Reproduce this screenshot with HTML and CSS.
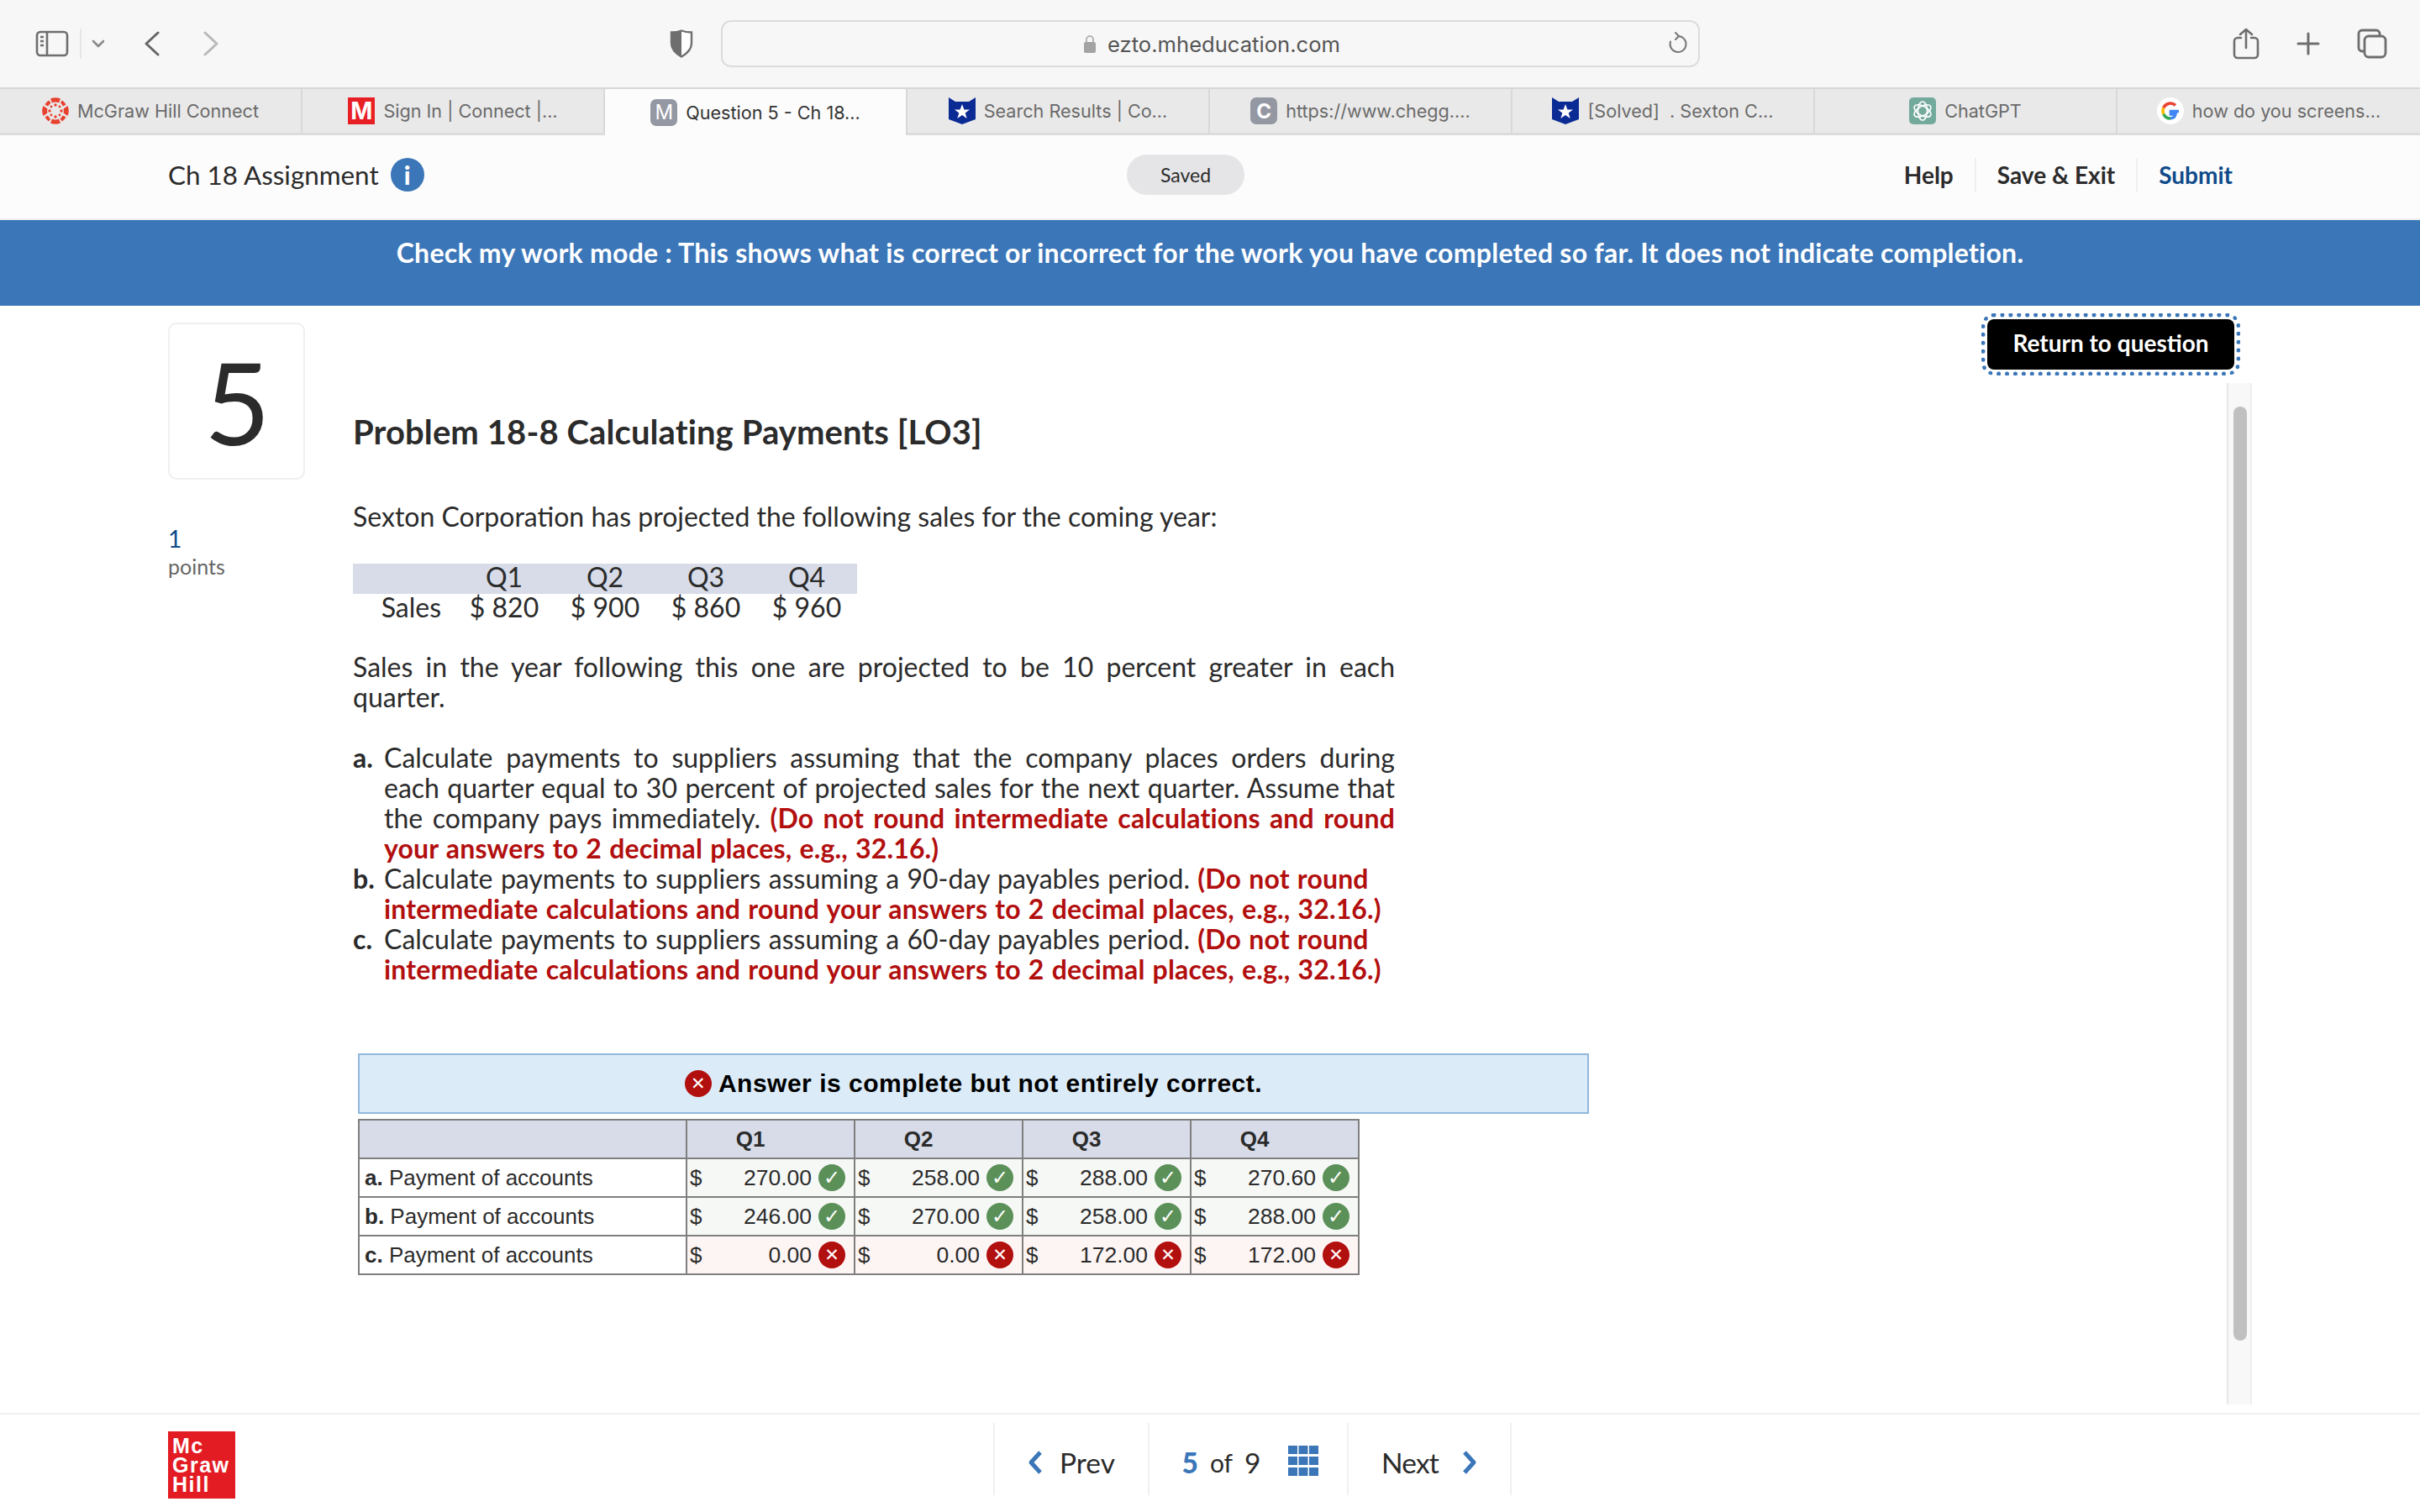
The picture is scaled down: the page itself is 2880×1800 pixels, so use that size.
FILE: index.html
```html
<!DOCTYPE html>
<html lang="en">
  <head>
    <meta charset="UTF-8" />
    <title>Question 5 - Ch 18 Assignment</title>
    <link rel="stylesheet" href="styles.css">
  </head>
  <body>
    <!-- Browser chrome -->
    <div class="toolbar">
      <div class="tool-left">
        <svg class="ic-sidebar" width="40" height="32" viewBox="0 0 40 32" fill="none" stroke="#6e6e6e" stroke-width="2.6"><rect x="2" y="2" width="36" height="28" rx="4"/><path d="M14 2v28M6 8h4M6 13h4M6 18h4"/></svg>
        <span class="tool-sep"></span>
        <svg class="ic-down" width="16" height="12" viewBox="0 0 16 12" fill="none" stroke="#8a8a8a" stroke-width="2.6" stroke-linecap="round" stroke-linejoin="round"><path d="M2 3l6 6 6-6"/></svg>
        <svg class="ic-back" width="20" height="30" viewBox="0 0 20 30" fill="none" stroke="#666" stroke-width="3" stroke-linecap="round" stroke-linejoin="round"><path d="M17 2L3 15l14 13"/></svg>
        <svg class="ic-fwd" width="20" height="30" viewBox="0 0 20 30" fill="none" stroke="#b9b9b9" stroke-width="3" stroke-linecap="round" stroke-linejoin="round"><path d="M3 2l14 13L3 28"/></svg>
      </div>
      <svg class="ic-shield" width="28" height="34" viewBox="0 0 28 34"><path d="M14 1.500C10 3 6 3.500 2 3.500v13c0 7 5 12 12 16 7-4 12-9 12-16v-13c-4 0-8-.5-12-2z" fill="#fff" stroke="#6e6e6e" stroke-width="2.400"/><path d="M14 1.500C10 3 6 3.500 2 3.500v13c0 7 5 12 12 16z" fill="#6e6e6e"/></svg>
      <div class="urlbar">
        <span class="url-text">
          <svg width="14" height="22" viewBox="0 0 14 22"><rect x="0" y="9" width="14" height="13" rx="2" fill="#a3a3a3"/><path d="M3 9V6a4 4 0 018 0v3" fill="none" stroke="#b5b5b5" stroke-width="2"/></svg>
          ezto.mheducation.com
        </span>
        <svg class="ic-reload" width="24" height="28" viewBox="0 0 24 28" fill="none" stroke="#777" stroke-width="2" stroke-linecap="round" stroke-linejoin="round"><path d="M12 5a9.500 9.500 0 11-9 6.500"/><path d="M9 1l4 4-4 4"/></svg>
      </div>
      <div class="tool-right">
        <svg width="32" height="38" viewBox="0 0 32 38" fill="none" stroke="#6e6e6e" stroke-width="2.600" stroke-linecap="round" stroke-linejoin="round"><path d="M10 12H6a4 4 0 00-4 4v16a4 4 0 004 4h20a4 4 0 004-4V16a4 4 0 00-4-4h-4M16 24V2M9 8l7-6 7 6"/></svg>
        <svg width="28" height="28" viewBox="0 0 28 28" fill="none" stroke="#6e6e6e" stroke-width="3" stroke-linecap="round"><path d="M14 2v24M2 14h24"/></svg>
        <svg width="36" height="36" viewBox="0 0 36 36" fill="none" stroke="#6e6e6e" stroke-width="2.800"><rect x="9" y="9" width="25" height="25" rx="5"/><path d="M8 27H6a4 4 0 01-4-4V6a4 4 0 014-4h17a4 4 0 014 4v2"/></svg>
      </div>
    </div>

    <div class="tabs">
      <div class="tab">
        <svg class="fav" viewBox="0 0 32 32" fill="#e8412e"><path d="M10 1.500a15 15 0 0112 0l-2 5a9 9 0 00-8 0zM22 30.500a15 15 0 01-12 0l2-5a9 9 0 008 0zM1.500 10l5 3.500a9 9 0 000 5l-5 3.500a15 15 0 010-12zM30.500 22l-5-3.500a9 9 0 000-5l5-3.500a15 15 0 010 12zM24 3.500a15 15 0 014.500 5l-3.500 2-3-4.500zM8 28.500a15 15 0 01-4.500-5l3.500-2 3 4.500zM3.500 8.500A15 15 0 018 3.500l2.500 3-3.500 4zM28.500 23.500a15 15 0 01-4.500 5l-2.500-3 3.500-4z"/><circle cx="16" cy="9" r="1.700"/><circle cx="16" cy="23" r="1.700"/><circle cx="9" cy="16" r="1.700"/><circle cx="23" cy="16" r="1.700"/><circle cx="11" cy="11" r="1.400"/><circle cx="21" cy="11" r="1.400"/><circle cx="11" cy="21" r="1.400"/><circle cx="21" cy="21" r="1.400"/></svg>
        McGraw Hill Connect
      </div>
      <div class="tab"><span class="fav fav-m">M</span>Sign In | Connect |...</div>
      <div class="tab tab-active"><span class="fav fav-gray">M</span>Question 5 - Ch 18...</div>
      <div class="tab">
        <svg class="fav" viewBox="0 0 32 32"><path d="M0 0l8 5h16l8-5v26l-16 6L0 26z" fill="#0a2a94"/><path d="M16 8l2.400 6.500H25l-5.300 4 2 6.500-5.700-4-5.700 4 2-6.500-5.300-4h6.600z" fill="#fff"/></svg>
        Search Results | Co...
      </div>
      <div class="tab"><span class="fav fav-gray fav-bold">C</span>https://www.chegg....</div>
      <div class="tab">
        <svg class="fav" viewBox="0 0 32 32"><path d="M0 0l8 5h16l8-5v26l-16 6L0 26z" fill="#0a2a94"/><path d="M16 8l2.400 6.500H25l-5.300 4 2 6.500-5.700-4-5.700 4 2-6.500-5.300-4h6.600z" fill="#fff"/></svg>
        [Solved]&nbsp; . Sexton C...
      </div>
      <div class="tab">
        <svg class="fav" viewBox="0 0 32 32"><rect width="32" height="32" rx="5" fill="#74aa9c"/><g fill="none" stroke="#fff" stroke-width="1.600"><ellipse cx="16" cy="16" rx="5.500" ry="11"/><ellipse cx="16" cy="16" rx="5.500" ry="11" transform="rotate(60 16 16)"/><ellipse cx="16" cy="16" rx="5.500" ry="11" transform="rotate(120 16 16)"/></g></svg>
        ChatGPT
      </div>
      <div class="tab">
        <svg class="fav" viewBox="0 0 32 32"><circle cx="16" cy="16" r="16" fill="#fff"/><path d="M26 16.500H16.500v3.500h5.400c-.6 3-3 4.800-5.900 4.800" fill="none" stroke="#4285f4" stroke-width="3.600"/><path d="M16 25a9 9 0 01-8.200-5.300" fill="none" stroke="#34a853" stroke-width="3.600"/><path d="M7.800 19.700a9 9 0 010-7.400" fill="none" stroke="#fbbc05" stroke-width="3.600"/><path d="M7.800 12.300A9 9 0 0122 9.300" fill="none" stroke="#ea4335" stroke-width="3.600"/></svg>
        how do you screens...
      </div>
    </div>

    <!-- Assignment header -->
    <header class="page-head">
      <div class="head-title">Ch 18 Assignment <span class="info-dot">i</span></div>
      <div class="saved">Saved</div>
      <nav class="head-nav"><a>Help</a><a>Save &amp; Exit</a><a class="submit-link">Submit</a></nav>
    </header>

    <div class="banner">Check my work mode : This shows what is correct or incorrect for the work you have completed so far. It does not indicate completion.</div>

    <main class="content">
      <aside class="side">
        <div class="num-card">5</div>
        <div class="pts-num">1</div>
        <div class="pts-label">points</div>
      </aside>

      <section class="question">
        <h1>Problem 18-8 Calculating Payments [LO3]</h1>
        <p class="intro">Sexton Corporation has projected the following sales for the coming year:</p>

        <table class="sales">
          <tr class="sales-head"><th></th><th>Q1</th><th>Q2</th><th>Q3</th><th>Q4</th></tr>
          <tr><td class="sales-label">Sales</td><td>$ 820</td><td>$ 900</td><td>$ 860</td><td>$ 960</td></tr>
        </table>

        <p class="body-text"><span class="just">Sales in the year following this one are projected to be 10 percent greater in each</span>quarter.</p>

        <div class="parts">
          <div class="part">
            <b>a.</b>
            <div>
              <span class="just">Calculate payments to suppliers assuming that the company places orders during</span>
              <span class="just">each quarter equal to 30 percent of projected sales for the next quarter. Assume that</span>
              <span class="just">the company pays immediately. <b class="red">(Do not round intermediate calculations and round</b></span>
              <b class="red">your answers to 2 decimal places, e.g., 32.16.)</b>
            </div>
          </div>
          <div class="part">
            <b>b.</b>
            <div>Calculate payments to suppliers assuming a 90-day payables period. <b class="red">(Do not round<br>intermediate calculations and round your answers to 2 decimal places, e.g., 32.16.)</b></div>
          </div>
          <div class="part">
            <b>c.</b>
            <div>Calculate payments to suppliers assuming a 60-day payables period. <b class="red">(Do not round<br>intermediate calculations and round your answers to 2 decimal places, e.g., 32.16.)</b></div>
          </div>
        </div>

        <div class="answer-box"><span class="mark mark-x">&#10005;</span> Answer is complete but not entirely correct.</div>

        <table class="answers">
          <colgroup><col class="col-label"><col class="col-q"><col class="col-q"><col class="col-q"><col class="col-q"></colgroup>
          <tr><th></th><th>Q1</th><th>Q2</th><th>Q3</th><th>Q4</th></tr>
          <tr>
            <td><b>a.</b> Payment of accounts</td>
            <td class="ok"><div class="cell"><span>$</span><span class="val">270.00</span><span class="mark mark-ok">&#10003;</span></div></td>
            <td class="ok"><div class="cell"><span>$</span><span class="val">258.00</span><span class="mark mark-ok">&#10003;</span></div></td>
            <td class="ok"><div class="cell"><span>$</span><span class="val">288.00</span><span class="mark mark-ok">&#10003;</span></div></td>
            <td class="ok"><div class="cell"><span>$</span><span class="val">270.60</span><span class="mark mark-ok">&#10003;</span></div></td>
          </tr>
          <tr>
            <td><b>b.</b> Payment of accounts</td>
            <td class="ok"><div class="cell"><span>$</span><span class="val">246.00</span><span class="mark mark-ok">&#10003;</span></div></td>
            <td class="ok"><div class="cell"><span>$</span><span class="val">270.00</span><span class="mark mark-ok">&#10003;</span></div></td>
            <td class="ok"><div class="cell"><span>$</span><span class="val">258.00</span><span class="mark mark-ok">&#10003;</span></div></td>
            <td class="ok"><div class="cell"><span>$</span><span class="val">288.00</span><span class="mark mark-ok">&#10003;</span></div></td>
          </tr>
          <tr>
            <td><b>c.</b> Payment of accounts</td>
            <td class="bad"><div class="cell"><span>$</span><span class="val">0.00</span><span class="mark mark-x">&#10005;</span></div></td>
            <td class="bad"><div class="cell"><span>$</span><span class="val">0.00</span><span class="mark mark-x">&#10005;</span></div></td>
            <td class="bad"><div class="cell"><span>$</span><span class="val">172.00</span><span class="mark mark-x">&#10005;</span></div></td>
            <td class="bad"><div class="cell"><span>$</span><span class="val">172.00</span><span class="mark mark-x">&#10005;</span></div></td>
          </tr>
        </table>
      </section>

      <div class="right-col">
        <button class="return-btn">Return to question</button>
        <div class="scroll-track"><div class="scroll-thumb"></div></div>
      </div>
    </main>

    <footer class="foot">
      <div class="mh-logo"><span>Mc</span><span>Graw</span><span>Hill</span></div>
      <nav class="pager">
        <div class="pager-item">
          <svg width="18" height="28" viewBox="0 0 18 28" fill="none" stroke="#3b76b8" stroke-width="5" stroke-linejoin="round"><path d="M15 2L4 14l11 12"/></svg>
          Prev
        </div>
        <div class="pager-item">
          <b class="cur">5</b><span class="of">of</span><span>9</span>
          <svg class="grid-ic" width="36" height="36" viewBox="0 0 36 36" fill="#3b76b8"><rect x="0" y="0" width="11" height="10"/><rect x="12.500" y="0" width="11" height="10"/><rect x="25" y="0" width="11" height="10"/><rect x="0" y="13" width="11" height="10"/><rect x="12.500" y="13" width="11" height="10"/><rect x="25" y="13" width="11" height="10"/><rect x="0" y="26" width="11" height="10"/><rect x="12.500" y="26" width="11" height="10"/><rect x="25" y="26" width="11" height="10"/></svg>
        </div>
        <div class="pager-item">
          <span class="next-label">Next</span>
          <svg width="18" height="28" viewBox="0 0 18 28" fill="none" stroke="#3b76b8" stroke-width="5" stroke-linejoin="round"><path d="M3 2l11 12L3 26"/></svg>
        </div>
      </nav>
    </footer>
  </body>
</html>
```

FILE: styles.css
```css
:root{--blue:#3b76b8;--navy:#0f4a8a;--ink:#2b2b2b;--red:#b20f0f;--green:#5b9058;--head:#d7dce8;--line:#7f7f7f}
*{box-sizing:border-box;margin:0;padding:0}
html,body{height:1800px;overflow:hidden}
body{background:#fff;color:var(--ink);font-family:"Lato",sans-serif;display:flex;flex-direction:column}

/* browser chrome */
.toolbar{height:104px;flex:none;background:#f7f7f7;display:flex;align-items:center;position:relative;padding:0 39px 0 42px}
.tool-left{display:flex;align-items:center;width:755px}
.tool-sep{width:2px;height:36px;background:#e6e6e6;margin:0 12px 0 13px}
.ic-down{margin-right:46px}
.ic-fwd{margin-left:50px}
.ic-shield{margin:0 33px 0 0}
.urlbar{width:1165px;height:56px;border:2px solid #dcdcdc;border-radius:12px;display:flex;align-items:center;justify-content:center;position:relative;font-family:"Inter",sans-serif;font-size:25.6px;color:#555;padding-left:4px}
.url-text{display:flex;align-items:center;gap:14px}
.ic-reload{position:absolute;right:12px;top:12px}
.tool-right{margin-left:auto;display:flex;align-items:center;gap:44px}
.tabs{height:57px;flex:none;display:flex;background:#e9e9e9;border-top:2px solid #d6d6d6;border-bottom:3px solid #dcdcdc;font-family:"Inter",sans-serif;font-size:21.6px;color:#6a6a6a}
.tab{width:360px;display:flex;align-items:center;justify-content:center;gap:10px;border-right:2px solid #d8d8d8;white-space:nowrap}
.tab:last-child{border-right:0}
.tab-active{background:#fcfcfc;color:#333;margin-bottom:-3px;border-top:0}
.fav{width:32px;height:32px;flex:none}
.fav-m{background:#e81f25;color:#fff;font-weight:700;font-size:28px;display:flex;align-items:center;justify-content:center}
.fav-gray{background:#9498a3;color:#fff;border-radius:7px;font-size:24px;display:flex;align-items:center;justify-content:center}
.fav-bold{font-weight:700}

/* assignment header */
.page-head{height:101px;flex:none;background:#fcfcfc;border-bottom:2px solid #efefef;padding:0 223px 6px 200px;display:grid;grid-template-columns:1141px auto 1fr;align-items:center}
.head-title{font-size:31.4px;display:flex;align-items:center;gap:14px}
.info-dot{width:40px;height:40px;border-radius:50%;background:var(--blue);color:#fff;font-weight:900;font-size:30px;display:flex;align-items:center;justify-content:center}
.saved{width:140px;height:48px;border-radius:24px;background:#e5e5e8;font-size:23px;display:flex;align-items:center;justify-content:center}
.head-nav{justify-self:end;display:flex;align-items:center;font-size:28px;font-weight:700}
.head-nav a{padding:0 25px;height:40px;display:flex;align-items:center;border-right:2px solid #efefef}
.head-nav a:last-child{border-right:0;padding-right:0}
.submit-link{color:var(--navy)}
.banner{height:102px;flex:none;background:var(--blue);color:#fff;font-size:32px;font-weight:700;letter-spacing:.25px;text-align:center;padding-top:19px}

/* question area */
.content{flex:1;min-height:0;display:flex;padding:0 200px 10px 200px}
.side{width:220px;flex:none;padding-top:20px}
.num-card{width:163px;height:187px;border:2px solid #efefef;border-radius:10px;font-size:136px;line-height:1;padding-left:2px;display:flex;align-items:center;justify-content:center}
.pts-num{margin-top:50px;font-size:28px;color:var(--navy);line-height:40px}
.pts-label{font-size:25px;color:#666;line-height:26px}
.question{flex:1;min-width:0}
h1{font-size:40px;font-weight:700;line-height:48px;margin-top:126px;letter-spacing:.1px}
.intro,.body-text,.parts,.sales{font-size:32px;line-height:36px}
.intro{margin-top:59px}
.sales{margin-top:38px;width:600px;border-collapse:collapse;table-layout:fixed;text-align:center}
.sales th{font-weight:400;height:36px;line-height:32px;padding-bottom:4px}
.sales td{height:36px;line-height:32px;padding-bottom:4px}
.sales-head{background:var(--head)}
.sales .sales-label{text-align:right;padding-right:15px}
.body-text{width:1240px;margin-top:33px}
.just{display:block;text-align:justify;text-align-last:justify}
.parts{width:1240px;margin-top:36px}
.part{display:grid;grid-template-columns:37px 1fr;word-spacing:1.2px}
.red{color:var(--red);letter-spacing:.15px}
.answer-box{margin:82px 0 0 6px;width:1465px;height:72px;background:#dbebf8;border:2px solid #93b8dd;color:#000;font-family:"Liberation Sans",sans-serif;font-weight:700;font-size:30px;letter-spacing:.5px;display:flex;align-items:center;justify-content:center;gap:8px}
.answers{margin:6px 0 0 6px;border-collapse:collapse;table-layout:fixed;width:1190px;font-family:"Liberation Sans",sans-serif;font-size:26px}
.col-label{width:390px}
.col-q{width:200px}
.answers th,.answers td{height:46px;border:2px solid var(--line)}
.answers th{background:var(--head);padding-right:48px}
.answers td:first-child{padding-left:6px}
.answers .ok{background:#f6f8f6}
.answers .bad{background:#fdf5f4}
.cell{display:flex;align-items:center;padding:0 10px 0 3px}
.val{margin-left:auto;margin-right:8px;font-size:26.5px}
.mark{width:32px;height:32px;border-radius:50%;color:#fff;font-family:"DejaVu Sans",sans-serif;font-weight:700;font-size:21px;letter-spacing:0;display:inline-flex;align-items:center;justify-content:center;flex:none}
.mark-ok{background:var(--green);font-size:24px;font-weight:400}
.mark-x{background:var(--red)}

.right-col{width:315px;flex:none;display:flex;flex-direction:column;padding-top:16px}
.return-btn{width:294px;height:60px;flex:none;background:#000;color:#fff;border:0;border-radius:8px;padding-bottom:5px;font-family:"Lato",sans-serif;font-weight:700;font-size:28px;outline:5px dotted var(--blue);outline-offset:2px}
.scroll-track{margin:16px 0 0 285px;width:30px;flex:1;background:#f8f8f8;border-left:2px solid #e8e8e8;border-right:2px solid #eee;padding-top:28px;padding-left:6px}
.scroll-thumb{width:16px;height:1112px;border-radius:8px;background:#c0c0c0}

/* footer */
.foot{height:118px;flex:none;border-top:2px solid #f0f0f0;padding:20px 0 0 200px;display:flex;position:relative}
.mh-logo{width:80px;height:80px;background:#e31b23;color:#fff;font-family:"Liberation Sans",sans-serif;font-weight:700;font-size:25px;letter-spacing:1.5px;padding:6px 0 0 5px}
.mh-logo span{display:block;height:23px;line-height:23px}
.pager{margin:-10px 0 0 902px;height:86px;display:flex;font-size:33.500px;border-left:2px solid #f0f0f0}
.pager-item{display:flex;align-items:center;justify-content:center;gap:20px;padding-top:8px;border-right:2px solid #f0f0f0}
.pager-item:nth-child(1){width:184px}
.pager-item:nth-child(2){width:237px;gap:14px;padding-left:4px}
.pager-item:nth-child(3){width:194px;gap:28px;padding-right:0}
.next-label{letter-spacing:-.8px}
.cur{color:var(--blue);font-weight:900}
.of{font-size:30px}
.grid-ic{margin:-4px 0 0 18px}
```
